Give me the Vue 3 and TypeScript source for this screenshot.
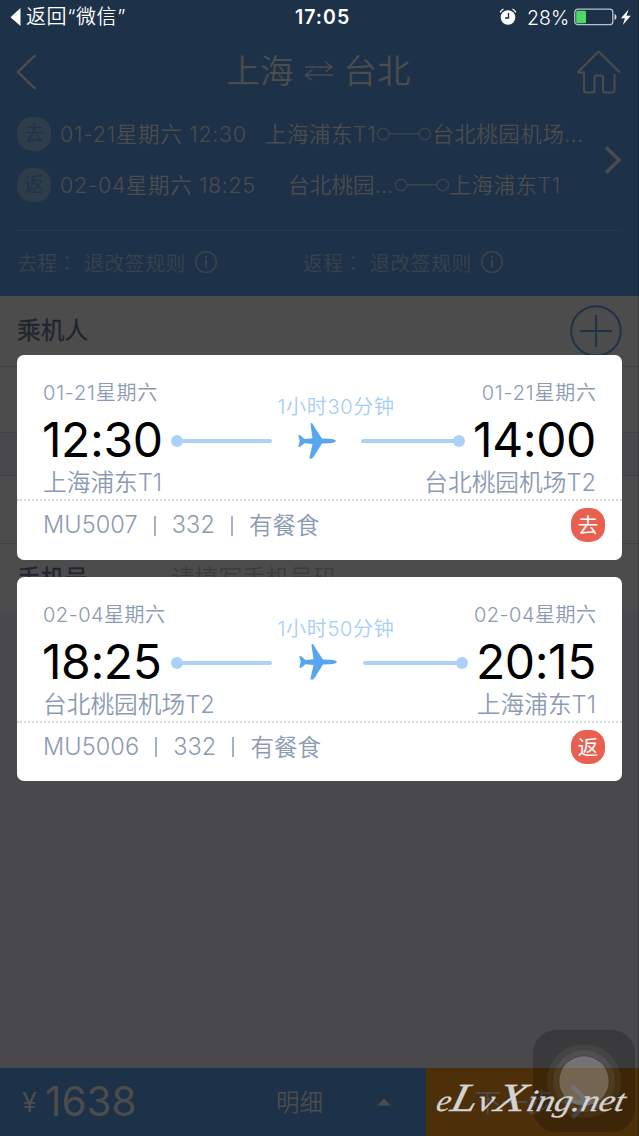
<script setup lang="ts">
interface Flight {
  date: string
  depart: string
  arrive: string
  from: string
  to: string
  duration: string
  code: string
  tag: string
  kind: string
}

const flights: Flight[] = [
  { date: '01-21星期六', depart: '12:30', arrive: '14:00', from: '上海浦东T1', to: '台北桃园机场T2', duration: '1小时30分钟', code: 'MU5007', tag: '去', kind: 'out' },
  { date: '02-04星期六', depart: '18:25', arrive: '20:15', from: '台北桃园机场T2', to: '上海浦东T1', duration: '1小时50分钟', code: 'MU5006', tag: '返', kind: 'back' },
]

const legs = [
  { tag: '去', when: '01-21星期六 12:30', from: '上海浦东T1', to: '台北桃园机场...', kind: 'out' },
  { tag: '返', when: '02-04星期六 18:25', from: '台北桃园...', to: '上海浦东T1', kind: 'back' },
]
</script>

<template>
  <div class="screen">
    <header class="top">
      <div class="status">
        <svg class="back-tri" width="11" height="20" viewBox="0 0 11 20"><path d="M10.5 1v18L.5 10.200z" fill="#fff" /></svg>
        <span class="status-back">返回“微信”</span>
        <span class="clock">17:05</span>
        <svg class="alarm" width="18" height="18" viewBox="0 0 18 18">
          <circle cx="9" cy="9.500" r="7.300" fill="#fff" />
          <path d="M1.300 4.500Q2 2 4.500 1.200M13.500 1.200Q16 2 16.700 4.500" fill="none" stroke="#fff" stroke-width="1.300" />
          <path d="M9.500 5v5H6" fill="none" stroke="#1d3249" stroke-width="1.400" />
        </svg>
        <span class="percent">28%</span>
        <svg class="battery" width="58" height="20" viewBox="0 0 58 20">
          <rect x=".8" y="2.200" width="38" height="15.500" rx="3" fill="none" stroke="#b9c1c9" stroke-width="1.300" />
          <rect x="2.200" y="3.700" width="9.800" height="12.500" rx="1.200" fill="#4cd964" />
          <path d="M40.500 7q2 .7 2 3t-2 3z" fill="#cfd4d9" />
          <path d="M54.500 2.500L47 11.200h4L48.800 18 56.800 8.700h-4.300z" fill="#fff" />
        </svg>
      </div>

      <div class="nav">
        <svg class="nav-back" width="22" height="38" viewBox="0 0 22 38"><path d="M19.500 2L2 19l17.500 17" fill="none" stroke="#4c4c4c" stroke-width="2.400" /></svg>
        <h1 class="title">
          <span>上海</span>
          <svg width="30" height="20" viewBox="0 0 30 20"><path d="M1 6h27M21 .5L28 6l-6.500 5M29 14H2M8.500 8.500L1.500 14l7 5.500" fill="none" stroke="#4c4c4c" stroke-width="1.300" /></svg>
          <span>台北</span>
        </h1>
        <svg class="home" width="46" height="46" viewBox="0 0 46 46"><path d="M1.500 23.500L22.500 2.500l21.500 21M1.500 23.500H8V41q0 2.500 2.500 2.500H16q2.500 0 2.500-2.500V29q0-2.500 2.500-2.500h3.500q2.500 0 2.500 2.500v12q0 2.500 2.500 2.500H36q2.500 0 2.500-2.500V25" fill="none" stroke="#4c4c4c" stroke-width="2" stroke-linejoin="round" /></svg>
      </div>

      <div class="legs">
        <div class="leg-list">
          <div v-for="leg in legs" :key="leg.tag" class="leg" :class="leg.kind">
            <span class="leg-tag">{{ leg.tag }}</span>
            <span class="when">{{ leg.when }}</span>
            <span class="from">{{ leg.from }}</span>
            <svg width="56" height="14" viewBox="0 0 56 14" class="link"><g fill="none" stroke="#3c444c" stroke-width="1.400"><circle cx="7.200" cy="7" r="5.800" /><circle cx="48.800" cy="7" r="5.800" /><path d="M13 6.800h30" /></g></svg>
            <span class="to">{{ leg.to }}</span>
          </div>
        </div>
        <svg class="more" width="18" height="30" viewBox="0 0 18 30"><path d="M2 2.500L15 15 2 27.500" fill="none" stroke="#4c4c4c" stroke-width="3.600" /></svg>
      </div>

      <div class="rules">
        <div v-for="label in ['去程', '返程']" :key="label" class="rule">
          <span class="rule-label">{{ label }}<span class="colon">：</span></span>
          <span class="rule-text">退改签规则</span>
          <svg width="24" height="24" viewBox="0 0 24 24"><circle cx="12" cy="12" r="10.300" fill="none" stroke="#39424a" stroke-width="1.800" /><path d="M12 10v8M12 6v2.300" stroke="#39424a" stroke-width="2.200" /></svg>
        </div>
      </div>
    </header>

    <main class="form">
      <div class="row passenger">
        <span class="field">乘机人</span>
        <svg width="52" height="52" viewBox="0 0 52 52"><g fill="none" stroke="#1d3249" stroke-width="1.900"><circle cx="26" cy="26" r="24.800" /><path d="M10.300 26h31.700M26.100 10v32" /></g></svg>
      </div>
      <div class="row empty"></div>
      <div class="gap"></div>
      <div class="row contact"></div>
      <div class="row phone"><span class="field">手机号</span><span class="placeholder">请填写手机号码</span></div>
    </main>

    <footer class="bottom">
      <div class="price"><span class="yen">¥</span><span class="amount">1638</span></div>
      <div class="detail"><span>明细</span><svg width="14" height="8" viewBox="0 0 14 8"><path d="M0 7.500L7 .5l7 7z" fill="#4c4c4c" /></svg></div>
      <div class="next">
        <span>下一步</span>
        <svg width="28" height="36" viewBox="0 0 28 36"><path d="M2 18h22M9 2l16 16L9 34" fill="none" stroke="#4c4c4c" stroke-width="4.500" /></svg>
      </div>
    </footer>

    <div class="modal">
      <section v-for="f in flights" :key="f.code" class="card" :class="f.kind">
        <div class="trip">
          <div class="end">
            <span class="date">{{ f.date }}</span>
            <span class="time">{{ f.depart }}</span>
            <span class="airport">{{ f.from }}</span>
          </div>
          <div class="path">
            <span class="duration">{{ f.duration }}</span>
            <div class="track">
              <i class="line start"></i>
              <svg class="plane" width="40" height="38" viewBox="0 0 40 38"><path d="M1.200 13l2 .2L7.500 17l8-.8L13.400 1.500l1.600-.6q1.200 1.500 3 5L25 16.600l7 .2q6.500.4 7 2.200-.5 1.800-7 2.300l-7 .2-7.500 12q-2 3.300-3.200 3.300l-2-.5L15.500 22l-8-.8-4.300 3.500-2 .1 1.500-6z" fill="#5aa5f0" /></svg>
              <i class="line finish"></i>
            </div>
          </div>
          <div class="end right">
            <span class="date">{{ f.date }}</span>
            <span class="time">{{ f.arrive }}</span>
            <span class="airport">{{ f.to }}</span>
          </div>
        </div>
        <div class="info">
          <span class="code">{{ f.code }}</span><i class="bar"></i><span class="craft">332</span><i class="bar"></i><span class="meal">有餐食</span>
          <span class="tag">{{ f.tag }}</span>
        </div>
      </section>
    </div>

    <div class="assist"><svg width="102" height="102" viewBox="0 0 102 102">
      <circle cx="51" cy="51" r="37" fill="#fff" fill-opacity=".05" />
      <circle cx="51" cy="51" r="31" fill="#fff" fill-opacity=".06" />
      <circle cx="51" cy="51" r="25" fill="#d8d8d8" fill-opacity=".27" stroke="#000" stroke-opacity=".2" />
    </svg></div>
    <svg class="watermark" width="209" height="56" viewBox="0 0 209 56">
      <g transform="translate(5 31)">
        <text fill="#d3d3d3" transform="skewX(-14)"><tspan x="0" textLength="14" lengthAdjust="spacingAndGlyphs">e</tspan><tspan x="14" class="cap" textLength="26" lengthAdjust="spacingAndGlyphs">L</tspan><tspan x="41" textLength="16" lengthAdjust="spacingAndGlyphs">v</tspan><tspan x="58" class="cap" textLength="31" lengthAdjust="spacingAndGlyphs">X</tspan><tspan x="90" textLength="98" lengthAdjust="spacingAndGlyphs">ing.net</tspan></text>
      </g>
    </svg>
    <div class="edge"></div>
  </div>
</template>

<style>
html, body { margin: 0; background: #49494b; }
</style>

<style scoped>
.screen { position: relative; width: 639px; height: 1136px; overflow: hidden; display: flex; flex-direction: column; background: #49494b; color: #4c4c4c; font-family: Inter, "Noto Sans CJK SC", sans-serif; font-weight: 350; }
.screen span { white-space: nowrap; }
svg { display: block; flex: none; }
.top { height: 296px; background: #1d3249; flex: none; display: flex; flex-direction: column; }
.status { height: 34px; display: flex; align-items: center; color: #fff; font-size: 20px; padding-left: 10px; font-weight: 350; }
.status-back { margin-left: 5px; line-height: 30px; width: 113px; letter-spacing: .6px; }
.clock { margin-left: 156px; width: 58px; font-weight: 600; font-size: 19.500px; letter-spacing: 1px; line-height: 34px; }
.alarm { margin-left: 146px; }
.percent { margin-left: 10px; width: 47px; font-size: 19.500px; padding-top: 1px; }
.nav { height: 70px; display: flex; align-items: center; justify-content: space-between; padding: 6px 17px 0 16px; box-sizing: border-box; }
.title { margin: 0 0 0 23px; font-size: 33.500px; font-weight: 350; line-height: 48px; display: flex; align-items: center; gap: 10px; }
.title span { margin-top: -2px; }
.title svg { margin-top: -2px; }
.home { margin-top: -1px; }
.legs { display: flex; width: 622px; height: 126px; justify-content: space-between; align-items: flex-start; }
.leg-list { padding: 4px 0 0 17px; }
.leg { display: flex; align-items: center; font-size: 21.500px; height: 51px; }
.leg .when, .leg .from, .leg .to { padding-bottom: 2px; }
.leg-tag { width: 34px; height: 34px; border-radius: 15px; background: #2d3d4a; color: #1d3249; line-height: 34px; text-align: center; font-size: 20px; margin-right: 9px; }
.when { width: 205px; letter-spacing: .7px; }
.from, .to { letter-spacing: .5px; }
.leg.back .when { width: 228px; letter-spacing: .6px; }
.leg.back .from { letter-spacing: .2px; }
.more { margin-top: 41px; }
.rules { display: flex; margin: 0 17px; border-top: 1px solid #243850; height: 62px; align-items: center; }
.rule { width: 286px; display: flex; align-items: center; font-size: 20px; color: #39424a; }
.rule-label { width: 67px; }
.colon { font-family: "Noto Sans CJK TC", sans-serif; }
.rule-text { letter-spacing: .3px; width: 110px; }
.form { flex: 1; display: flex; flex-direction: column; }
.row { background: #4c4c4c; box-sizing: border-box; border-bottom: 1px solid #404144; padding: 0 17px; display: flex; align-items: center; font-size: 23.700px; color: #20252d; }
.field { font-weight: 400; -webkit-text-stroke: .3px #20252d; padding-bottom: 3px; }
.passenger { height: 71px; justify-content: space-between; padding-bottom: 1px; }
.empty { height: 66px; }
.gap { height: 42px; background: #49494b; border-bottom: 1px solid #404144; }
.contact { height: 68px; }
.phone { height: 68px; border-bottom-color: #49494b; }
.phone .field { padding-bottom: 1px; }
.placeholder { margin-left: 83px; color: #3b3c3e; padding-bottom: 1px; }
.bottom { height: 68px; flex: none; display: flex; background: #1d3249; }
.price { width: 276px; box-sizing: border-box; padding-left: 22px; display: flex; align-items: center; font-weight: 400; }
.yen { width: 23px; font-size: 27px; }
.amount { font-size: 40.500px; line-height: 66px; }
.detail { width: 150px; display: flex; align-items: center; font-size: 23.500px; }
.detail span, .next span { padding-bottom: 3px; }
.detail svg { margin-left: 54px; }
.next { width: 213px; background: #4d2f0a; display: flex; align-items: center; padding-left: 49px; box-sizing: border-box; font-size: 26.500px; }
.next svg { margin-left: 8px; }
.modal { position: absolute; left: 17px; top: 355px; width: 605px; display: flex; flex-direction: column; gap: 17px; }
.card { height: 204.500px; background: #fff; border-radius: 7px; color: #8c9ab3; }
.trip { height: 146px; box-sizing: border-box; padding: 25px 26px 0; border-bottom: 2px dotted #d5d7da; display: flex; justify-content: space-between; }
.end { display: flex; flex-direction: column; width: 120px; }
.right { align-items: flex-end; }
.date { font-size: 20px; line-height: 26px; letter-spacing: .8px; margin-right: -.8px; }
.back .date { letter-spacing: .5px; margin-right: -.5px; }
.time { font-size: 48px; line-height: 66px; color: #000; margin-left: -1px; margin-top: 1px; letter-spacing: -.4px; font-weight: 400; }
.airport { font-size: 23.700px; line-height: 26px; margin-top: -3px; }
.right .time { margin-left: 0; }
.path { width: 294px; display: flex; flex-direction: column; }
.duration { color: #a4cdf8; font-size: 20px; line-height: 26px; margin: 14px 0 0 105px; letter-spacing: .7px; }
.track { display: flex; align-items: center; height: 38px; margin: 2px 0 0 4px; }
.line { width: 95px; height: 4px; background: #abd1f8; border-radius: 2px; position: relative; flex: none; }
.line::before { content: ""; position: absolute; width: 12px; height: 12px; border-radius: 50%; background: #abd1f8; top: -4px; left: -6px; }
.finish { width: 98px; }
.finish::before { left: auto; right: -6px; }
.plane { margin: -1px 24px 0 25px; }
.back .finish { width: 99px; }
.back .plane { margin: -1px 25px 0 26px; }
.info { height: 48px; padding: 0 17px 1px 26px; display: flex; align-items: center; font-size: 23.500px; }
.code, .craft { padding-bottom: 1px; letter-spacing: .1px; }
.info .meal { padding-bottom: 2px; }
.bar { width: 2px; height: 20px; background: #a6b1c5; margin: 1px 16px 0 16px; }
.tag { margin-left: auto; width: 34px; height: 34px; border-radius: 15px; line-height: 35px; text-align: center; background: #e96050; color: #fff; font-size: 20.500px; font-weight: 400; }
.assist { position: absolute; left: 533px; top: 1030px; width: 102px; height: 102px; border-radius: 23px; background: rgba(0, 0, 0, .2); }
.watermark { position: absolute; left: 430px; top: 1080px; overflow: visible; font-family: "Liberation Serif", serif; font-style: italic; font-size: 31px; font-weight: 400; stroke: #d3d3d3; stroke-width: .3px; }
.watermark .cap { font-size: 40px; }
.edge { position: absolute; right: 0; top: 0; width: 1px; height: 1136px; background: rgba(0, 0, 0, .25); }
</style>
